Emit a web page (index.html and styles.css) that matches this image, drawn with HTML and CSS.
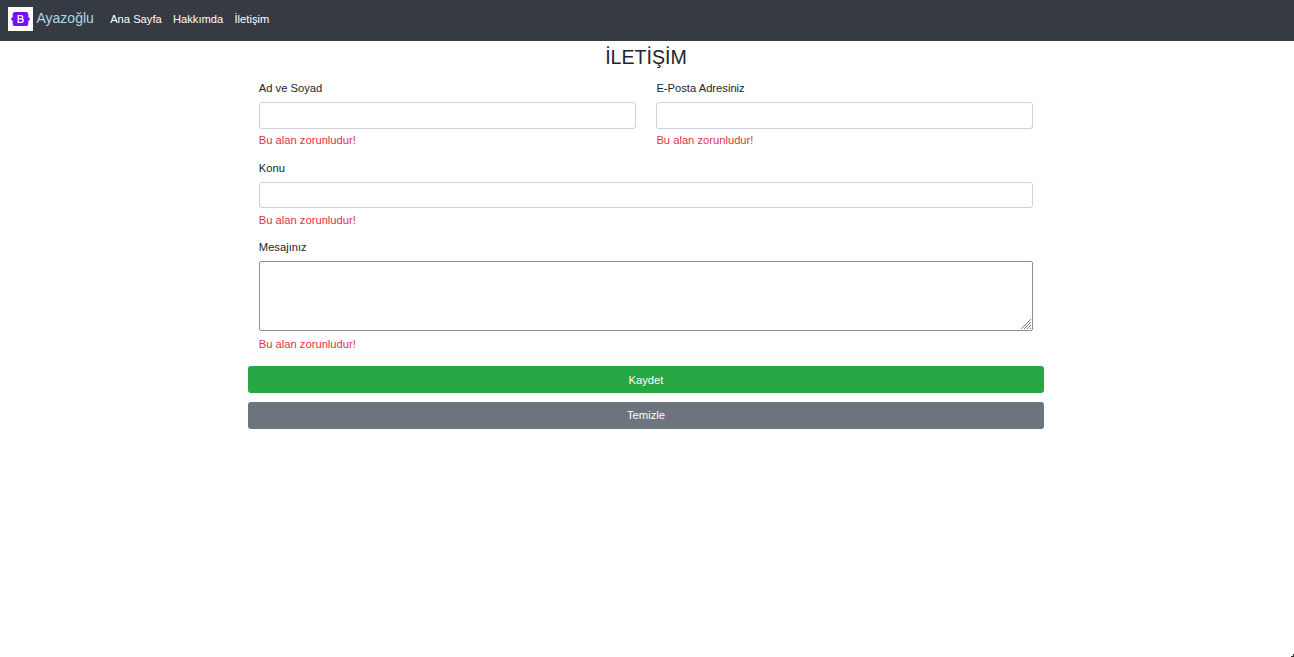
FILE: index.html
```html
<!DOCTYPE html>
<html lang="tr">
<head>
<meta charset="utf-8">
<title>İletişim</title>
<link rel="stylesheet" href="styles.css">
</head>
<body>
<nav class="navbar">
  <a class="brand" href="#">
    <svg class="logo" viewBox="0 0 25 24" aria-hidden="true">
      <path fill="#fff" d="M0 0h25v24H0z"/>
      <path fill="#7710fa" d="M7 5h11q2.200 0 2.300 2v2.500q.2 1.500 1.700 2v1q-1.500.5-1.700 2V17q-.1 2-2.300 2H7q-2.200 0-2.300-2v-2.500q-.2-1.500-1.700-2v-1q1.500-.5 1.700-2V7Q4.800 5 7 5z"/>
      <path fill="none" stroke="#fff" stroke-width="1.300" d="M10.200 8.700h2.700q1.900 0 1.900 1.500t-1.900 1.600h-2.700zM10.200 11.800h3q2.100 0 2.100 1.700t-2.100 1.800h-3z"/>
    </svg>
    <span>Ayazoğlu</span>
  </a>
  <div class="links">
    <a href="#">Ana Sayfa</a>
    <a href="#">Hakkımda</a>
    <a href="#">İletişim</a>
  </div>
</nav>
<main class="container">
  <h1 class="title">İLETİŞİM</h1>
  <form class="form">
    <div class="row">
      <div class="field">
        <label for="name">Ad ve Soyad</label>
        <input id="name" class="control" type="text">
        <p class="error">Bu alan zorunludur!</p>
      </div>
      <div class="field email">
        <label for="mail">E-Posta Adresiniz</label>
        <input id="mail" class="control" type="text">
        <p class="error">Bu alan zorunludur!</p>
      </div>
    </div>
    <div class="field subject">
      <label for="subject">Konu</label>
      <input id="subject" class="control" type="text">
      <p class="error">Bu alan zorunludur!</p>
    </div>
    <div class="field message">
      <label for="message">Mesajınız</label>
      <div class="area">
        <textarea id="message"></textarea>
        <svg class="grip" viewBox="0 0 10 10" aria-hidden="true"><path d="M0 10 10 0M3 10l7-7M6 10l4-4M9 10l1-1" stroke="#777" fill="none"/></svg>
      </div>
      <p class="error">Bu alan zorunludur!</p>
    </div>
  </form>
  <div class="actions">
    <button class="btn save" type="button">Kaydet</button>
    <button class="btn clear" type="button">Temizle</button>
  </div>
</main>
<svg class="corner" viewBox="0 0 3 3" aria-hidden="true"><path d="M2 0h1v3H0V2h2z" fill="#333"/></svg>
</body>
</html>
```
FILE: styles.css
```css
* { box-sizing: border-box; }
body {
  margin: 0;
  background: #fff;
  color: #212529;
  font: 11.2px/17px "Liberation Sans", Arial, sans-serif;
}
a { color: inherit; text-decoration: none; }
.navbar {
  display: flex;
  align-items: flex-start;
  height: 41px;
  padding: 7px 8px 0;
  background: #363a42;
}
.brand {
  display: flex;
  gap: 3.500px;
  color: #add8e6;
  font-size: 14px;
  line-height: 22px;
}
.logo { width: 25px; height: 24px; }
.links {
  display: flex;
  gap: 11.200px;
  padding: 4px 0 0 16.300px;
  color: #fff;
}
.container { width: 796px; margin-left: 248px; }
.title {
  margin: 0;
  padding-top: 4px;
  font-size: 19.600px;
  font-weight: 400;
  line-height: 24px;
  text-align: center;
}
.form { padding: 11px 11px 0; }
.row { display: grid; grid-template-columns: 377px 377px; gap: 20px; }
.field label { display: block; height: 22px; }
.field label, .error { text-indent: -0.200px; }
.email label, .email .error { text-indent: 0.400px; }
.control {
  display: block;
  width: 100%;
  height: 27px;
  padding: 4px 8px;
  border: 1px solid #ced0da;
  border-radius: 3px;
  background: #fff;
  font: inherit;
}
.error { margin: 3px 0 0; color: #dc3545; }
.subject { padding-top: 11px; }
.subject .control { height: 26px; }
.subject .error { margin-top: 4px; }
.message { padding-top: 10px; }
.area { position: relative; height: 70px; }
.area textarea {
  display: block;
  width: 100%;
  height: 70px;
  padding: 4px 8px;
  border: 1px solid #8f8f9d;
  border-radius: 2px;
  resize: none;
  font: inherit;
}
.grip { position: absolute; right: 2px; bottom: 2px; width: 10px; height: 10px; }
.message .error { margin-top: 5px; }
.actions { display: grid; gap: 9px; padding-top: 13px; }
.btn {
  height: 27px;
  padding: 0;
  border: 0;
  border-radius: 3px;
  color: #fff;
  font: inherit;
}
.save { padding-top: 1px; background: #28a745; }
.clear { background: #6c757d; }
.corner { position: fixed; right: 0; bottom: 0; width: 3px; height: 3px; }
```
